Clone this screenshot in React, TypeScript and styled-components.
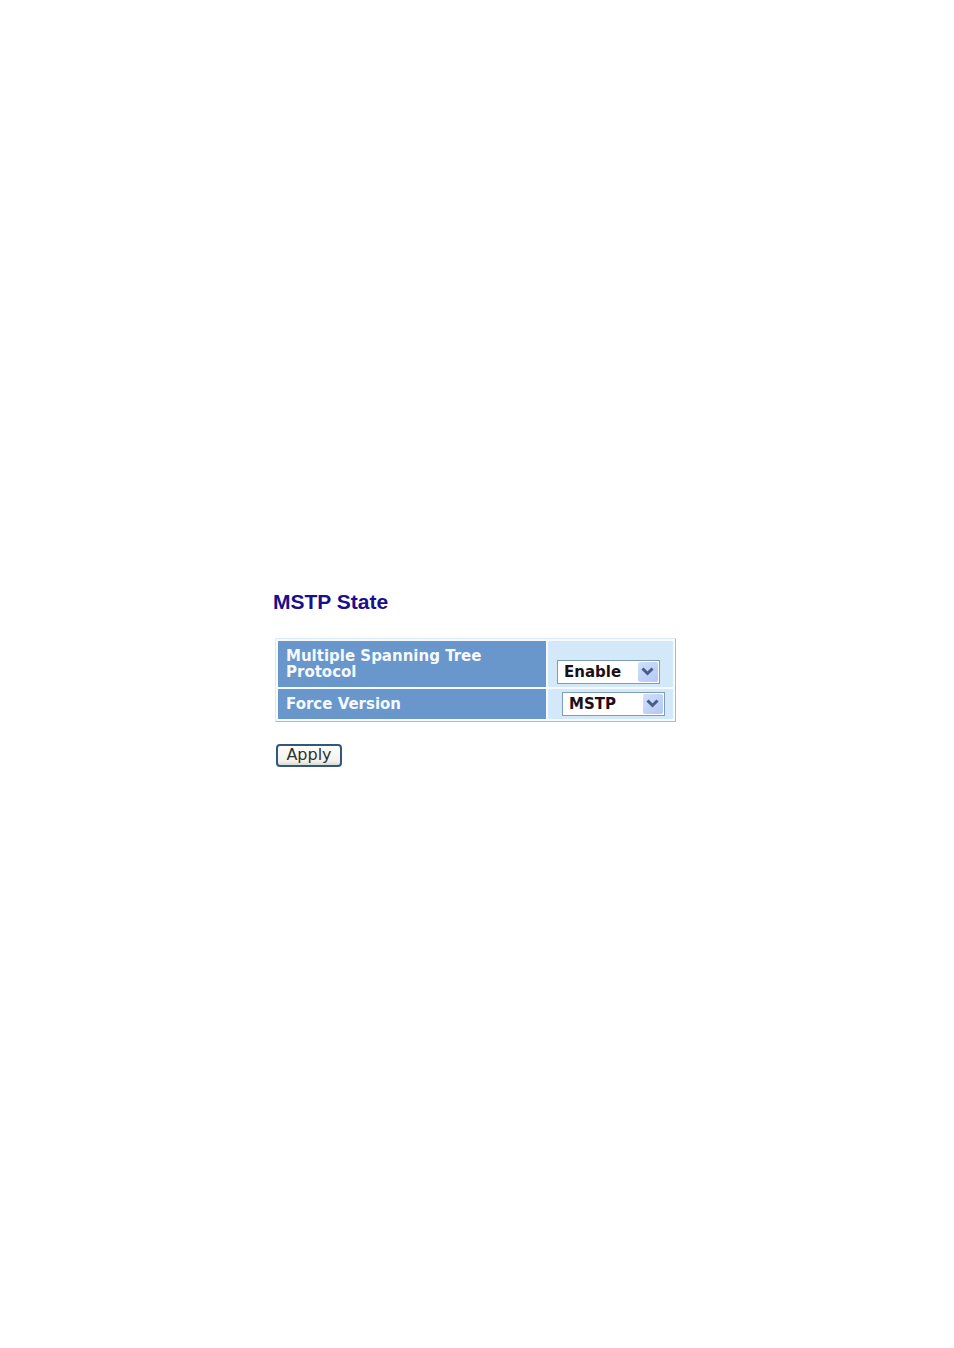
import React from "react";
import styled, { createGlobalStyle } from "styled-components";

const GlobalStyle = createGlobalStyle`
  * { box-sizing: border-box; }
  body {
    margin: 0;
    background: #fff;
    font-family: "DejaVu Sans", Verdana, sans-serif;
  }
`;

const Page = styled.main`
  max-width: 408px;
  margin: 0 auto;
  padding: 590px 0 40px;
`;

const Title = styled.h1`
  margin: 0 0 24px;
  font: bold 21px/24px "Liberation Sans", Arial, sans-serif;
  color: #1a0f8c;
`;

const Form = styled.form`
  padding: 0 5px 0 2px;
`;

const Settings = styled.table`
  width: 100%;
  border: 1px solid;
  border-color: #dcecf4 #b2b8bc #b2b8bc #dcecf4;
  border-collapse: separate;
  border-spacing: 2px;
  background: #f4fafd;
`;

const Row = styled.tr<{ $height: number }>`
  height: ${(p) => p.$height}px;
`;

const NameCell = styled.th`
  padding: 0 48px 0 8px;
  background: #6996cb;
  color: #f4faff;
  font-size: 15px;
  line-height: 16px;
  text-align: left;
`;

const ValueCell = styled.td<{ $indent: number }>`
  width: 125px;
  padding: 0 0 3px ${(p) => p.$indent}px;
  background: #d3e8f9;
  vertical-align: bottom;
`;

const Picker = styled.div`
  position: relative;
  width: 103px;
  height: 24px;
`;

const Select = styled.select`
  appearance: none;
  display: block;
  width: 100%;
  height: 100%;
  margin: 0;
  padding: 0 24px 0 6px;
  border: 1px solid #7c9db4;
  border-radius: 0;
  background: #fff;
  color: #1c1016;
  font: bold 15px "DejaVu Sans", Verdana, sans-serif;
`;

const Arrow = styled.svg`
  position: absolute;
  top: 2px;
  right: 2px;
  pointer-events: none;
`;

const ApplyButton = styled.button`
  display: block;
  width: 66px;
  height: 23px;
  margin: 22px 0 0 1px;
  padding: 0 0 1px;
  border: 2px solid #31577c;
  border-radius: 4px;
  background: linear-gradient(#fefefc, #f2f1ea 80%, #dcd9d0);
  color: #30302e;
  font: 16px/18px "DejaVu Sans", Verdana, sans-serif;
`;

function Dropdown({ id, options }: { id: string; options: string[] }) {
  return (
    <Picker>
      <Select id={id} defaultValue={options[0]}>
        {options.map((o) => (
          <option key={o}>{o}</option>
        ))}
      </Select>
      <Arrow width="20" height="20" viewBox="0 0 20 20" aria-hidden="true">
        <defs>
          <linearGradient id={`${id}-fill`} x1="0" y1="0" x2="1" y2="1">
            <stop offset="0" stopColor="#d0dffb" />
            <stop offset="1" stopColor="#b3c9f2" />
          </linearGradient>
        </defs>
        <rect width="20" height="20" rx="2" fill={`url(#${id}-fill)`} />
        <path d="M4.5 6.5 L9.5 11.5 L14.5 6.5" fill="none" stroke="#455e8c" strokeWidth="3" />
      </Arrow>
    </Picker>
  );
}

export default function App() {
  return (
    <>
      <GlobalStyle />
      <Page>
        <Title>MSTP State</Title>
        <Form onSubmit={(e) => e.preventDefault()}>
          <Settings>
            <tbody>
              <Row $height={46}>
                <NameCell scope="row">
                  <label htmlFor="protocol">Multiple Spanning Tree Protocol</label>
                </NameCell>
                <ValueCell $indent={9}>
                  <Dropdown id="protocol" options={["Enable", "Disable"]} />
                </ValueCell>
              </Row>
              <Row $height={30}>
                <NameCell scope="row">
                  <label htmlFor="version">Force Version</label>
                </NameCell>
                <ValueCell $indent={14}>
                  <Dropdown id="version" options={["MSTP", "RSTP", "STP"]} />
                </ValueCell>
              </Row>
            </tbody>
          </Settings>
          <ApplyButton type="submit">Apply</ApplyButton>
        </Form>
      </Page>
    </>
  );
}
